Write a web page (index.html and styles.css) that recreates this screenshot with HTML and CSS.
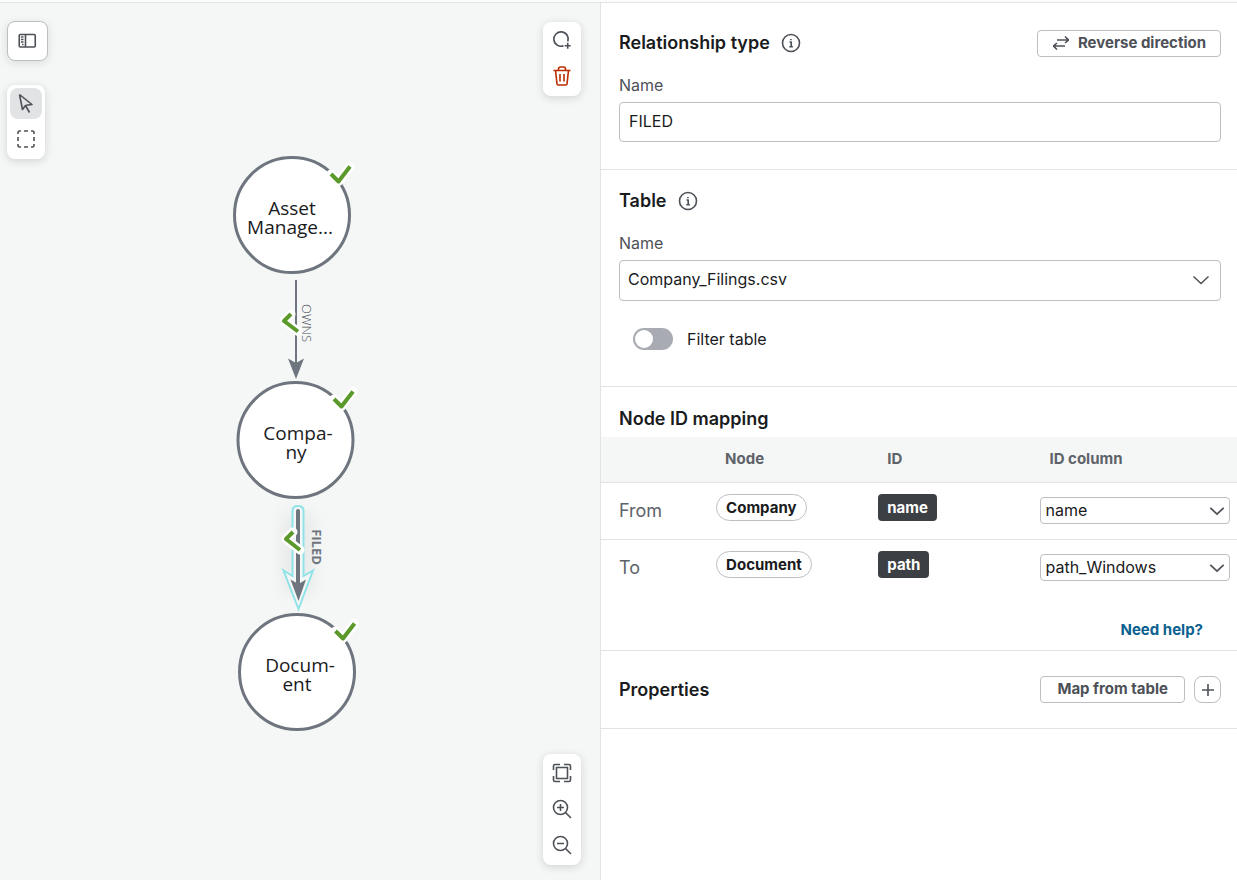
FILE: index.html
```html
<!DOCTYPE html>
<html lang="en">
<head>
<meta charset="utf-8">
<title>Data model</title>
<link rel="stylesheet" href="styles.css">
</head>
<body>
<main class="app">
  <section class="canvas" aria-label="Graph model">
    <svg class="graph" viewBox="0 0 600 877">
      <defs>
        <path id="tick" d="M-9 0L-1.500 7.500L10 -7.500" />
        <filter id="glow" filterUnits="userSpaceOnUse" x="240" y="460" width="120" height="180"><feGaussianBlur stdDeviation="8" /></filter>
      </defs>
      <g class="edge">
        <path class="edge-line" d="M296 277V360" />
        <path class="edge-head" d="M296 376L288 355.500L296 360L304 355.500Z" />
        <text class="edge-label" transform="translate(302 320) rotate(90)">OWNS</text>
      </g>
      <g class="edge">
        <path class="edge-shadow" d="M298 510V590" filter="url(#glow)" />
        <path class="edge-halo" d="M292.500 508Q292.500 503 298 503T303.500 508V573L313 567.500L298.500 606L283.500 567.500L292.500 573Z" />
        <path class="edge-line edge-line-selected" d="M298 508V585" />
        <path class="edge-head" d="M298.500 598L290.500 576.500L298.500 581L306 576.500Z" />
        <text class="edge-label edge-label-selected" transform="translate(312 544) rotate(90)">FILED</text>
      </g>
      <g class="node">
        <circle cx="292" cy="212" r="57.500" />
        <text y="212"><tspan x="292">Asset</tspan><tspan x="290" dy="19">Manage...</tspan></text>
      </g>
      <g class="node">
        <circle cx="295.500" cy="437" r="57.500" />
        <text y="437"><tspan x="298">Compa-</tspan><tspan x="296" dy="19">ny</tspan></text>
      </g>
      <g class="node">
        <circle cx="297" cy="669" r="57.500" />
        <text y="669"><tspan x="300">Docum-</tspan><tspan x="297" dy="19">ent</tspan></text>
      </g>
      <g class="tick-back">
        <use href="#tick" x="340" y="171" /><use href="#tick" x="343" y="396" /><use href="#tick" x="344.500" y="628" />
        <path d="M291 311L284 318L298 328.500" /><path d="M293 529L286 536L300 547" />
      </g>
      <g class="tick-front">
        <use href="#tick" x="340" y="171" /><use href="#tick" x="343" y="396" /><use href="#tick" x="344.500" y="628" />
        <path d="M291 311L284 318L298 328.500" /><path d="M293 529L286 536L300 547" />
      </g>
    </svg>

    <div class="tools-left">
      <button class="tool panel-toggle" aria-label="Toggle side panel">
        <svg class="icon" viewBox="0 0 20 20"><rect x="1.250" y="3.500" width="16" height="12.500" rx="1" /><path d="M7.500 3.500v12.500M3 6h2.500M3 8.500h2.500M3 11h2.500M4 13.500h1.500" /></svg>
      </button>
      <div class="toolbar">
        <button class="tool tool-active" aria-label="Select">
          <svg class="icon" viewBox="0 0 20 20"><path d="M3.500 1.500L6.500 16.500L9.500 12.500L13.500 19.500M10.200 12.300L16 11.500L3.500 1.500" /></svg>
        </button>
        <button class="tool" aria-label="Area select">
          <svg class="icon" viewBox="0 0 20 20"><path d="M2 5V3.500Q2 2 3.500 2H5M8 2h4M15 2h1.500Q18 2 18 3.500V5M18 8v4M18 15v1.500Q18 18 16.500 18H15M12 18H8M5 18H3.500Q2 18 2 16.500V15M2 12V8" /></svg>
        </button>
      </div>
    </div>

    <div class="toolbar tools-top">
      <button class="tool" aria-label="Add node">
        <svg class="icon" viewBox="0 0 20 20"><path d="M11.500 15.800A7.200 7.200 0 1 1 15.800 11.500M15.700 12.800v6M12.700 15.800h6" /></svg>
      </button>
      <button class="tool tool-danger" aria-label="Delete">
        <svg class="icon" viewBox="0 0 20 20"><path d="M1.500 4.500h17M3.500 4.500L5 18q.1 1 1 1h8q.9 0 1-1l1.500-13.500M6.500 4.200V3q0-2 2-2h3q2 0 2 2v1.200M8 8v7.500M12 8v7.500" /></svg>
      </button>
    </div>

    <div class="toolbar tools-bottom">
      <button class="tool" aria-label="Fit to screen">
        <svg class="icon" viewBox="0 0 20 20"><rect x="4.500" y="4.500" width="11" height="11" /><path d="M1.500 7V3q0-1.500 1.500-1.500h5M12 1.500H17q1.500 0 1.500 1.500v4M18.500 13v4q0 1.500-1.500 1.500h-5M8 18.500H3Q1.500 18.500 1.500 17v-4" /></svg>
      </button>
      <button class="tool" aria-label="Zoom in">
        <svg class="icon" viewBox="0 0 20 20"><circle cx="8.500" cy="8.500" r="7" /><path d="M13.500 13.500L19 19M8.500 5v7M5 8.500h7" /></svg>
      </button>
      <button class="tool" aria-label="Zoom out">
        <svg class="icon" viewBox="0 0 20 20"><circle cx="8.500" cy="8.500" r="7" /><path d="M13.500 13.500L19 19M5 8.500h7" /></svg>
      </button>
    </div>
  </section>

  <aside class="details">
    <section class="section">
      <header class="section-head">
        <h2>Relationship type</h2>
        <svg class="icon" viewBox="0 0 20 20"><circle cx="10" cy="10" r="8.500" /><path d="M8.500 9h1.700v4.500M8.300 13.700h3.600M9.900 6v1.200" /></svg>
        <button class="btn push">
          <svg class="icon icon-small" viewBox="0 0 16 16"><path d="M4 5h11.500M12 1.500L15.500 5l-3.500 3M12 11H.500M4 8L.500 11l3.500 3.500" /></svg>
          Reverse direction
        </button>
      </header>
      <label class="label" for="rel-name">Name</label>
      <input class="field" id="rel-name" type="text" value="FILED">
    </section>

    <section class="section section-table">
      <header class="section-head">
        <h2>Table</h2>
        <svg class="icon" viewBox="0 0 20 20"><circle cx="10" cy="10" r="8.500" /><path d="M8.500 9h1.700v4.500M8.300 13.700h3.600M9.900 6v1.200" /></svg>
      </header>
      <label class="label" for="table-name">Name</label>
      <div class="select">
        <select class="field field-select" id="table-name"><option>Company_Filings.csv</option></select>
        <svg class="chevron" viewBox="0 0 18 18"><path d="M1.500 5.500L9 12.500L16.500 5.500" /></svg>
      </div>
      <label class="switch"><input type="checkbox" role="switch">Filter table</label>
    </section>

    <section class="mapping">
      <h2>Node ID mapping</h2>
      <table class="map">
        <thead>
          <tr><th class="c-dir"></th><th class="c-mid">Node</th><th class="c-mid">ID</th><th class="c-col">ID column</th></tr>
        </thead>
        <tbody>
          <tr>
            <td class="dir">From</td>
            <td><span class="pill">Company</span></td>
            <td><span class="chip">name</span></td>
            <td><div class="select"><select class="field field-compact" aria-label="From ID column"><option>name</option></select><svg class="chevron chevron-compact" viewBox="0 0 18 18"><path d="M1.500 5.500L9 12.500L16.500 5.500" /></svg></div></td>
          </tr>
          <tr>
            <td class="dir">To</td>
            <td><span class="pill">Document</span></td>
            <td><span class="chip">path</span></td>
            <td><div class="select"><select class="field field-compact" aria-label="To ID column"><option>path_Windows</option></select><svg class="chevron chevron-compact" viewBox="0 0 18 18"><path d="M1.500 5.500L9 12.500L16.500 5.500" /></svg></div></td>
          </tr>
        </tbody>
      </table>
      <a class="help" href="#help">Need help?</a>
    </section>

    <section class="section properties">
      <h2>Properties</h2>
      <button class="btn btn-wide push">Map from table</button>
      <button class="btn btn-add" aria-label="Add property"><svg class="icon icon-small" viewBox="0 0 16 16"><path d="M8 2v12M2 8h12" /></svg></button>
    </section>
  </aside>
</main>
</body>
</html>
```
FILE: styles.css
```css
* { box-sizing: border-box; }

body {
  margin: 0;
  padding-top: 2px;
  min-height: 100vh;
  display: flex;
  background: #fafbfb;
  color: #1a1b1d;
  font: 16px/20px Inter, "Liberation Sans", sans-serif;
}

button, input, select { font: inherit; color: inherit; }
button { cursor: pointer; }

.app {
  flex: 1;
  display: grid;
  grid-template-columns: 600fr 637fr;
  border-top: 1px solid #e2e3e5;
}

/* Canvas */
.canvas { position: relative; background: #f5f7f6; }
.graph { position: absolute; inset: 0; width: 100%; height: 100%; }

.node circle { fill: #fff; stroke: #6f757e; stroke-width: 3; }
.node text {
  font: 19px "Open Sans", sans-serif;
  fill: #1a1b1d;
  text-anchor: middle;
}
.edge-line { stroke: #6f757e; stroke-width: 2; }
.edge-line-selected { stroke-width: 4; stroke-linecap: round; }
.edge-head { fill: #6f757e; }
.edge-halo { fill: #f5f7f6; stroke: #8fe3e8; stroke-width: 2; }
.edge-shadow { stroke: #e8eaea; stroke-width: 32; }
.edge-label {
  font: 300 13px "Open Sans", sans-serif;
  fill: #4d5157;
  text-anchor: middle;
}
.edge-label-selected { font-weight: 700; fill: #6f757e; }
.tick-back { fill: none; stroke: #fff; stroke-width: 9; stroke-linecap: round; stroke-linejoin: round; }
.tick-front { fill: none; stroke: #5b992b; stroke-width: 4; stroke-linejoin: round; }

.tools-left {
  position: absolute;
  top: 18px;
  left: 7px;
  display: flex;
  flex-direction: column;
  align-items: flex-start;
  gap: 24px;
}
.toolbar {
  display: flex;
  flex-direction: column;
  gap: 5px;
  padding: 3px 3px 4px;
  border-radius: 8px;
  background: #fff;
  box-shadow: 0 2px 8px rgba(26, 27, 29, .16);
}
.tools-top { position: absolute; top: 19px; right: 19px; }
.tools-bottom { position: absolute; bottom: 15px; right: 19px; padding: 4px 3px; }

.tool {
  display: grid;
  place-items: center;
  width: 32px;
  height: 31px;
  padding: 0 0 1px;
  border: 0;
  border-radius: 8px;
  background: none;
  color: #4d5157;
}
.tool-active { background: #e2e3e5; }
.tool-danger { color: #bb2d00; }
.panel-toggle {
  width: 41px;
  height: 40px;
  border: 1px solid #bbbec3;
  background: #fff;
  box-shadow: 0 2px 8px rgba(26, 27, 29, .12);
}

.icon {
  width: 20px;
  height: 20px;
  flex: none;
  fill: none;
  stroke: currentColor;
  stroke-width: 1.6;
  stroke-linejoin: round;
}
.icon-small { width: 16px; height: 16px; }

/* Details */
.details { border-left: 1px solid #e2e3e5; background: #fff; }
.section {
  display: flex;
  flex-direction: column;
  padding: 26px 16px 27px 18px;
  border-bottom: 1px solid #e2e3e5;
}
.section-table { padding: 17px 16px 36px 18px; }
.section-head { display: flex; align-items: center; gap: 11px; height: 28px; color: #4d5157; }

h2 { margin: 0; font-size: 18px; line-height: 24px; font-weight: 600; color: #1a1b1d; }

.label { margin: 18px 0 7px; color: #4d5157; }

.field {
  width: 100%;
  height: 40px;
  padding: 0 9px 2px;
  border: 1px solid #bbbec3;
  border-radius: 4px;
  background: #fff;
  appearance: none;
}
.select { position: relative; }
.field-select { height: 41px; padding: 0 8px 3px; display: block; }
.field-compact { display: block; height: 27px; padding: 0 4px 2px; }
.chevron {
  position: absolute;
  top: 50%;
  right: 11px;
  width: 18px;
  height: 18px;
  margin-top: -10px;
  fill: none;
  stroke: #4d5157;
  stroke-width: 1.5;
  pointer-events: none;
}
.chevron-compact { width: 16px; height: 16px; right: 5px; margin-top: -8px; stroke-width: 2; }

.switch { display: flex; align-items: center; gap: 14px; margin: 27px 0 0 14px; height: 22px; }
.switch input {
  appearance: none;
  width: 40px;
  height: 22px;
  margin: 0;
  padding: 2px;
  border-radius: 11px;
  background: #a8acb2;
}
.switch input::before {
  content: "";
  display: block;
  width: 18px;
  height: 18px;
  border-radius: 50%;
  background: #fff;
}
.switch input:checked { background: #0a6190; padding-left: 20px; }

.btn {
  display: flex;
  align-items: center;
  gap: 9px;
  height: 27px;
  padding: 0 14px 1px 15px;
  border: 1px solid #bbbec3;
  border-radius: 4px;
  background: #fff;
  color: #4d5157;
  font-size: 15px;
  font-weight: 700;
}
.btn-wide { padding: 0 16px 1px; }
.btn-add { width: 27px; padding: 0; justify-content: center; border-radius: 8px; }
.push { margin-left: auto; }

.mapping {
  display: flex;
  flex-direction: column;
  padding-top: 20px;
  border-bottom: 1px solid #e2e3e5;
}
.mapping h2 { padding: 0 18px 6px; }
.map { width: 100%; border-collapse: collapse; table-layout: fixed; }
.c-dir { width: 18.1%; }
.c-mid { width: 25.5%; }
.c-col { width: 30.9%; }
.map th {
  height: 45px;
  padding: 0 9px;
  background: #f5f7f6;
  border-bottom: 1px solid #e2e3e5;
  text-align: left;
  font-size: 15px;
  font-weight: 700;
  color: #5e636a;
}
.map td { height: 57px; padding: 0 7px 0 0; vertical-align: middle; }
.map tr + tr td { border-top: 1px solid #e2e3e5; }
.map .dir { padding-left: 18px; font-size: 18px; color: #5e636a; }

.pill, .chip {
  display: inline-block;
  height: 27px;
  margin-bottom: 6px;
  padding: 0 9px;
  line-height: 25px;
  font-size: 15px;
  font-weight: 700;
  vertical-align: middle;
}
.pill { border: 1px solid #bbbec3; border-radius: 14px; }
.chip { border-radius: 4px; background: #3c3f44; color: #fff; line-height: 27px; }

.help {
  align-self: flex-end;
  margin: 24px 34px 10px;
  color: #0a6190;
  font-size: 15px;
  font-weight: 700;
  text-decoration: none;
}
.properties { flex-direction: row; align-items: center; gap: 9px; padding-top: 25px; padding-bottom: 25px; }
```
